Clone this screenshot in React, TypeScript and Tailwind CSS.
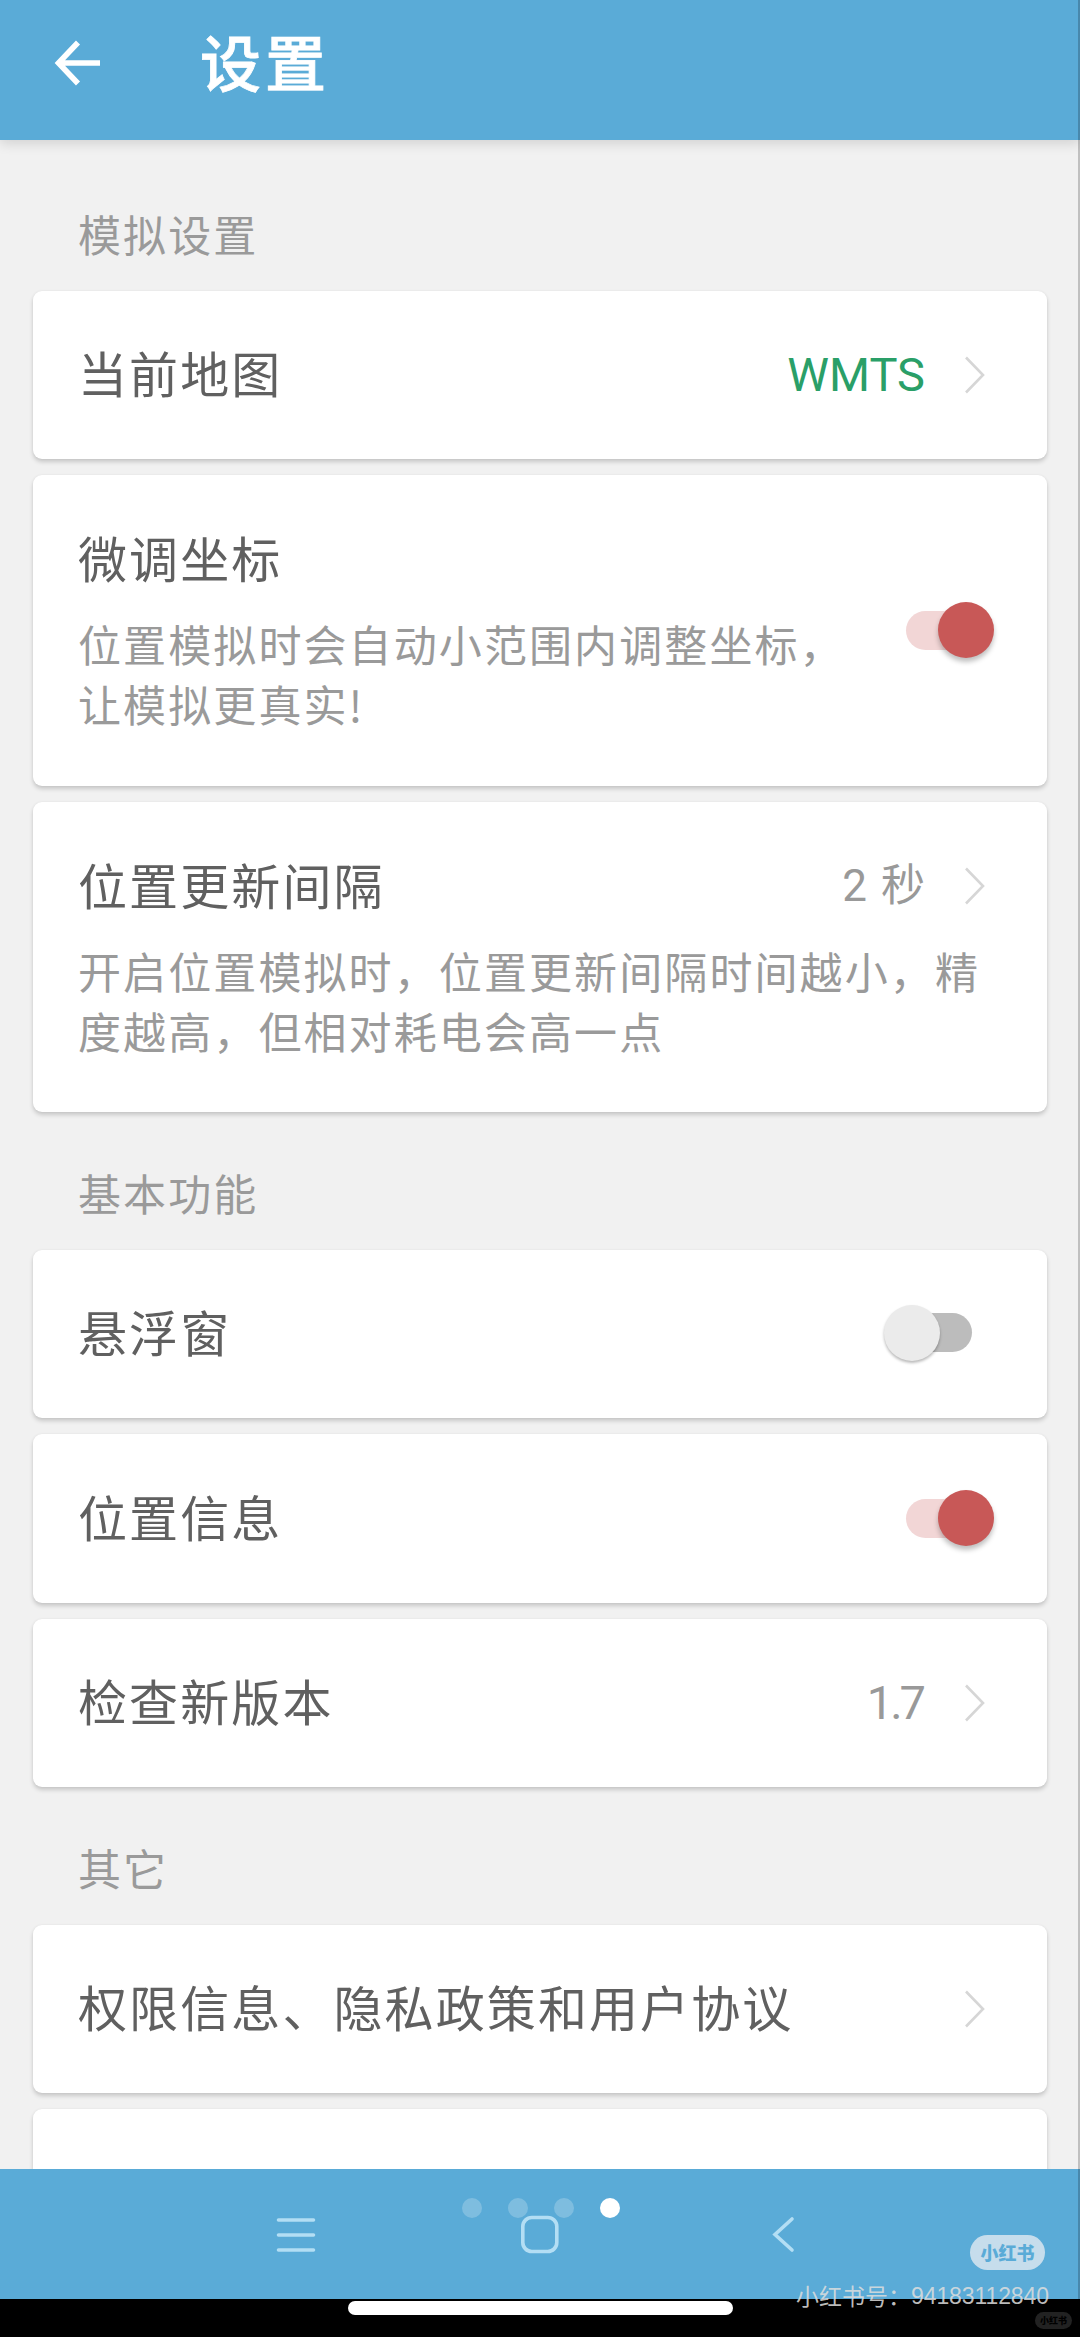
import type { ReactNode } from "react";

type Row = {
  title: string;
  description?: string[];
  value?: string;
  valueClass?: string;
  enabled?: boolean;
};

type Section = {
  name: string;
  rows: Row[];
};

const sections: Section[] = [
  {
    name: "模拟设置",
    rows: [
      { title: "当前地图", value: "WMTS", valueClass: "text-[47px] text-[#2a9f68]" },
      {
        title: "微调坐标",
        description: ["位置模拟时会自动小范围内调整坐标，", "让模拟更真实!"],
        enabled: true,
      },
      {
        title: "位置更新间隔",
        description: [
          "开启位置模拟时，位置更新间隔时间越小，精",
          "度越高，但相对耗电会高一点",
        ],
        value: "2 秒",
        valueClass: "text-[44px] [word-spacing:3px] text-[#999]",
      },
    ],
  },
  {
    name: "基本功能",
    rows: [
      { title: "悬浮窗", enabled: false },
      { title: "位置信息", enabled: true },
      {
        title: "检查新版本",
        value: "1.7",
        valueClass: "text-[47px] tracking-[-3px] pr-[2px] text-[#999]",
      },
    ],
  },
  {
    name: "其它",
    rows: [{ title: "权限信息、隐私政策和用户协议", value: "" }, { title: "" }],
  },
];

function Chevron() {
  return (
    <svg className="ml-[38px] h-[40px] w-[24px] shrink-0" viewBox="0 0 24 40" fill="none">
      <path d="M3 2.5 20 20 3 37.5" stroke="#d6d6d6" strokeWidth="2.6" />
    </svg>
  );
}

function Toggle({ on }: { on: boolean }) {
  return (
    <div
      className={`flex h-[56px] w-[88px] shrink-0 items-center ${
        on ? "mr-[2px] justify-end" : "mr-[24px] mb-[2px]"
      }`}
    >
      {on ? (
        <>
          <div className="-mr-[28px] h-[39px] w-[60px] rounded-full bg-[#f2d6d6]" />
          <div className="size-[56px] rounded-full bg-[#c85857] shadow-[0_4px_5px_rgba(0,0,0,0.25)]" />
        </>
      ) : (
        <>
          <div className="relative size-[56px] rounded-full bg-[#ebebeb] shadow-[0_2px_3px_rgba(0,0,0,0.28)]" />
          <div className="-ml-[28px] h-[39px] w-[60px] rounded-full bg-[#bcbcbc]" />
        </>
      )}
    </div>
  );
}

function Card({ children }: { children: ReactNode }) {
  return (
    <div className="flex min-h-[168.5px] items-center rounded-[9px] bg-white pr-[51px] pl-[45px] shadow-[0_3px_4px_rgba(0,0,0,0.17),0_0_3px_rgba(0,0,0,0.05)]">
      {children}
    </div>
  );
}

function SettingRow({ row }: { row: Row }) {
  const hasToggle = row.enabled !== undefined;

  return (
    <Card>
      <div className={row.description ? "flex-1 pt-[50px] pb-[52.5px]" : "flex-1"}>
        <div className="flex h-[69px] items-center">
          <h2 className="flex-1 pb-[6px] text-[49px] leading-[63px] tracking-[2.1px] whitespace-nowrap text-[#606060]">
            {row.title}
          </h2>
          {row.value !== undefined && (
            <>
              <span
                className={`font-[Roboto,'Noto_Sans_CJK_SC',sans-serif] leading-[69px] whitespace-nowrap ${
                  row.valueClass ?? ""
                }`}
              >
                {row.value}
              </span>
              <Chevron />
              <span className="w-[9px]" />
            </>
          )}
        </div>
        {row.description && (
          <p className="mt-[19px] text-[43px] leading-[60px] tracking-[2.1px] whitespace-nowrap text-[#9a9a9a]">
            {row.description.map((line) => (
              <span key={line} className="block">
                {line}
              </span>
            ))}
          </p>
        )}
      </div>
      {hasToggle && <Toggle on={row.enabled!} />}
    </Card>
  );
}

export default function App() {
  return (
    <div
      lang="zh-CN"
      className="relative flex h-[2337px] w-[1080px] flex-col overflow-hidden bg-[#f1f1f1] font-['Noto_Sans_CJK_SC',sans-serif]"
    >
      <header className="z-10 flex h-[140px] shrink-0 items-center bg-[#5aabd7] pb-[14px] pl-[54px] shadow-[0_3px_12px_rgba(0,0,0,0.14)]">
        <svg className="h-[48px] w-[48px]" viewBox="0 0 48 48" fill="none">
          <path d="M24 3.5 4.5 24 24 44.5M4 24h42" stroke="white" strokeWidth="5.6" />
        </svg>
        <h1 className="ml-[98px] pb-[5px] text-[61px] leading-[80px] font-medium tracking-[4px] text-white [-webkit-text-stroke:0.8px_white]">
          设置
        </h1>
      </header>

      <main className="h-[2029px] shrink-0 overflow-hidden px-[33px] pt-[13px]">
        {sections.map((section) => (
          <section key={section.name}>
            <p className="pt-[49.5px] pb-[28px] pl-[45px] text-[43px] leading-[60px] tracking-[2.1px] text-[#9a9a9a]">
              {section.name}
            </p>
            <div className="flex flex-col gap-4">
              {section.rows.map((row) => (
                <SettingRow key={row.title} row={row} />
              ))}
            </div>
          </section>
        ))}
      </main>

      {/* Android navigation bar */}
      <nav className="flex h-[130px] shrink-0 items-start bg-[#5aabd7] pt-[45px] pl-[276px] text-[#b3def4]">
        <svg className="h-[42px] w-[40px]" viewBox="0 0 40 42" fill="none">
          <path
            d="M2.5 6h35M2.5 21h35M2.5 36h35"
            stroke="currentColor"
            strokeWidth="3.6"
            strokeLinecap="round"
          />
        </svg>
        <svg className="ml-[204px] h-[42px] w-[40px]" viewBox="0 0 40 42" fill="none">
          <rect x="2.8" y="3.5" width="34" height="34" rx="9" stroke="currentColor" strokeWidth="3.6" />
        </svg>
        <svg className="ml-[211px] h-[42px] w-[28px]" viewBox="0 0 28 42" fill="none">
          <path
            d="M21 5 4 20.5 21 36"
            stroke="currentColor"
            strokeWidth="3.6"
            strokeLinecap="round"
          />
        </svg>
      </nav>

      <footer className="flex h-[38px] shrink-0 justify-center bg-black pt-[2px]">
        <div className="h-[14px] w-[385px] rounded-full bg-white" />
      </footer>

      {/* page dots */}
      <div className="absolute top-[2198px] left-[462px] flex gap-[26px]">
        <span className="size-[20px] rounded-full bg-white/22" />
        <span className="size-[20px] rounded-full bg-white/22" />
        <span className="size-[20px] rounded-full bg-white/22" />
        <span className="size-[20px] rounded-full bg-white" />
      </div>

      <div className="absolute top-0 right-0 z-20 h-[2299px] w-[2px] bg-black/20" />

      {/* watermark */}
      <div className="absolute top-[2235px] left-[970px] flex h-[35px] w-[75px] items-center justify-center rounded-full bg-[#c6ddec] pb-[1px] text-[18px] leading-none font-black text-[#5aabd7]">
        小红书
      </div>
      <div className="absolute top-[2278px] left-[796px] flex text-[23px] leading-[34px] whitespace-nowrap text-[#dedede]/85">
        <span>小红书号：</span>
        <span className="pt-[1px] font-['Liberation_Sans',sans-serif] tracking-[-0.1px]">
          94183112840
        </span>
      </div>
      <div className="absolute top-[2312px] left-[1035px] flex h-[17px] w-[37px] items-center justify-center rounded-full bg-[#222] text-[9px] leading-none font-black text-black">
        小红书
      </div>
    </div>
  );
}
